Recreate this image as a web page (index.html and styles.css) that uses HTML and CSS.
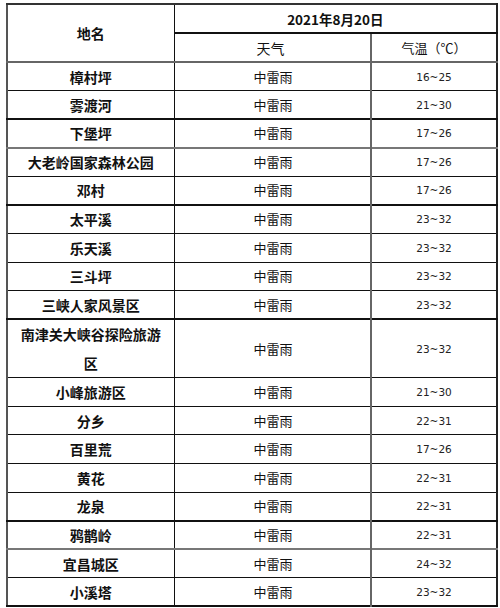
FILE: index.html
```html
<!DOCTYPE html>
<html lang="zh">
<head>
<meta charset="utf-8">
<link rel="stylesheet" href="styles.css">
</head>
<body>
<table class="wx">
  <colgroup>
    <col class="c-name">
    <col class="c-wx">
    <col class="c-temp">
  </colgroup>
  <thead>
    <tr class="h1">
      <th class="name-h" rowspan="2">地名</th>
      <th class="date" colspan="2">2021年8月20日</th>
    </tr>
    <tr class="h2">
      <th class="wx-h">天气</th>
      <th class="temp-h">气温（℃）</th>
    </tr>
  </thead>
  <tbody>
    <tr class="grey-top"><td class="name">樟村坪</td><td class="cond">中雷雨</td><td class="temp">16~25</td></tr>
    <tr><td class="name">雾渡河</td><td class="cond">中雷雨</td><td class="temp">21~30</td></tr>
    <tr class="thick-top"><td class="name">下堡坪</td><td class="cond">中雷雨</td><td class="temp">17~26</td></tr>
    <tr class="grey-top"><td class="name">大老岭国家森林公园</td><td class="cond">中雷雨</td><td class="temp">17~26</td></tr>
    <tr><td class="name">邓村</td><td class="cond">中雷雨</td><td class="temp">17~26</td></tr>
    <tr class="thick-top"><td class="name">太平溪</td><td class="cond">中雷雨</td><td class="temp">23~32</td></tr>
    <tr><td class="name">乐天溪</td><td class="cond">中雷雨</td><td class="temp">23~32</td></tr>
    <tr><td class="name">三斗坪</td><td class="cond">中雷雨</td><td class="temp">23~32</td></tr>
    <tr><td class="name">三峡人家风景区</td><td class="cond">中雷雨</td><td class="temp">23~32</td></tr>
    <tr class="thick-top double"><td class="name">南津关大峡谷探险旅游区</td><td class="cond">中雷雨</td><td class="temp">23~32</td></tr>
    <tr><td class="name">小峰旅游区</td><td class="cond">中雷雨</td><td class="temp">21~30</td></tr>
    <tr><td class="name">分乡</td><td class="cond">中雷雨</td><td class="temp">22~31</td></tr>
    <tr><td class="name">百里荒</td><td class="cond">中雷雨</td><td class="temp">17~26</td></tr>
    <tr><td class="name">黄花</td><td class="cond">中雷雨</td><td class="temp">22~31</td></tr>
    <tr><td class="name">龙泉</td><td class="cond">中雷雨</td><td class="temp">22~31</td></tr>
    <tr class="thick-top"><td class="name">鸦鹊岭</td><td class="cond">中雷雨</td><td class="temp">22~31</td></tr>
    <tr class="grey-top"><td class="name">宜昌城区</td><td class="cond">中雷雨</td><td class="temp">24~32</td></tr>
    <tr><td class="name">小溪塔</td><td class="cond">中雷雨</td><td class="temp">23~32</td></tr>
  </tbody>
</table>
</body>
</html>
```

FILE: styles.css
```css
html, body {
  margin: 0;
  padding: 0;
  background: #ffffff;
}

body {
  padding: 3px 0 0 6px;
  font-family: "Noto Sans CJK SC", "Noto Sans", sans-serif;
  color: #111111;
}

.wx {
  border-collapse: collapse;
  table-layout: fixed;
  width: 490px;
  border-top: 2px solid #333333;
  border-right: 2px solid #222222;
  border-bottom: 2px solid #111111;
  border-left: 2px solid #555555;
}

.c-name { width: 167px; }
.c-wx { width: 197px; }
.c-temp { width: 126px; }

.wx th,
.wx td {
  padding: 0;
  border-top: 1px solid #111111;
  border-bottom: 1px solid #111111;
  line-height: 20px;
  vertical-align: middle;
  font-weight: normal;
}

.wx .h1, .wx .h2 { height: 29px; }

.wx .name-h {
  font-size: 14px;
  font-weight: bold;
  text-align: center;
  border-right: 1px solid #111111;
  border-bottom: 2px solid #666666;
}

.wx .date {
  font-size: 13.5px;
  font-weight: bold;
  text-align: center;
  border-bottom: 2px solid #111111;
}

.wx .wx-h {
  font-size: 14px;
  text-align: left;
  padding-left: 82px;
  border-right: 2px solid #666666;
  border-bottom: 2px solid #666666;
}

.wx .temp-h {
  font-size: 13px;
  text-align: center;
  border-bottom: 2px solid #666666;
}

.wx tbody tr { height: 28.58px; }
.wx tbody tr.double { height: 57.16px; }

.wx .name {
  font-size: 14px;
  font-weight: bold;
  text-align: center;
  padding: 0 10px;
  border-right: 1px solid #111111;
}

.wx .double .name { line-height: 28.5px; }

.wx .cond {
  font-size: 13px;
  text-align: left;
  padding-left: 79px;
  border-right: 2px solid #666666;
}

.wx .temp {
  font-family: "DejaVu Sans", "Liberation Sans", sans-serif;
  font-size: 10.5px;
  text-align: center;
  color: #222222;
}

.wx .thick-top td { border-top: 2px solid #111111; }
.wx .grey-top td { border-top: 2px solid #777777; }
```
